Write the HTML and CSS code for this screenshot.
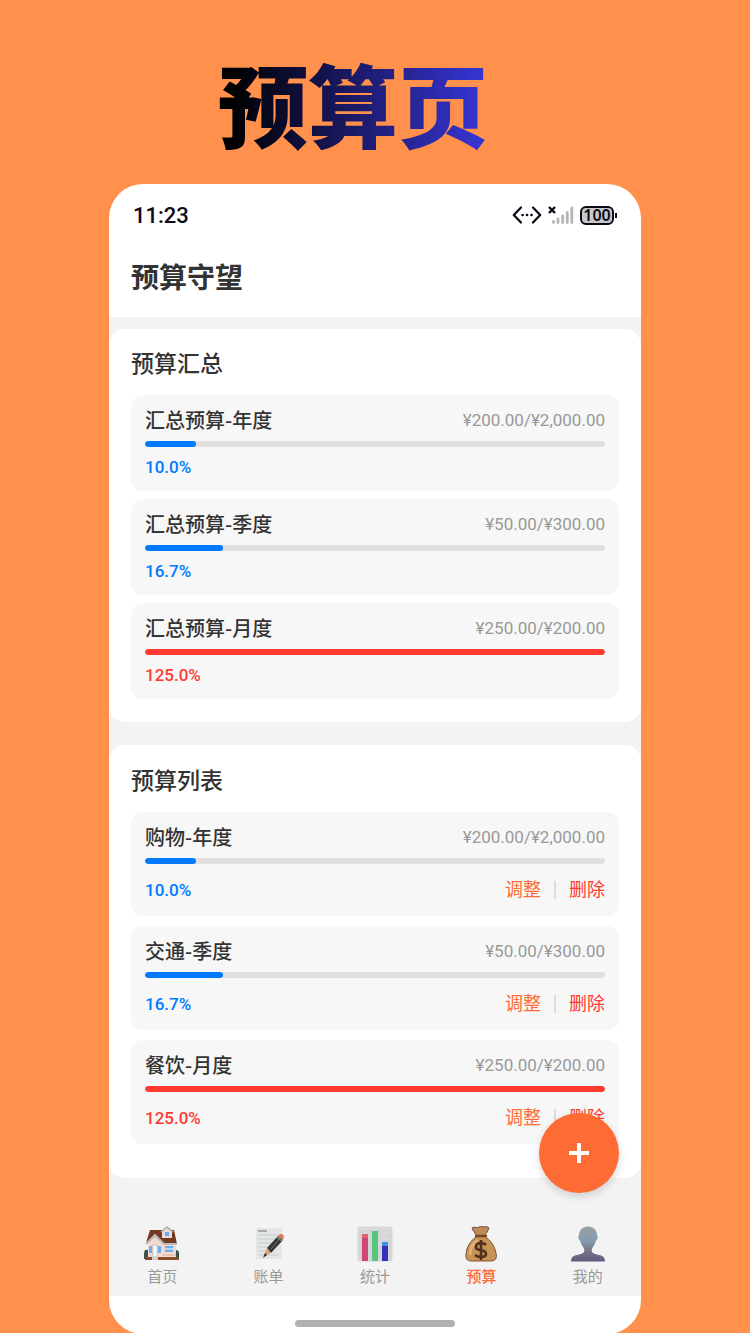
FILE: index.html
```html
<!DOCTYPE html>
<html lang="zh-CN">
<head>
<meta charset="utf-8">
<meta name="viewport" content="width=device-width, initial-scale=1">
<title>预算页</title>
<link rel="stylesheet" href="styles.css">
</head>
<body>
<div class="page">
  <h1 class="poster-title"><span class="poster-text">预算页</span></h1>
  <div class="phone">
    <div class="status-bar">
      <span class="clock">11:23</span>
      <span class="status-icons">
        <svg width="30" height="20" viewBox="0 0 30 20" fill="none" stroke="#0b0b18" stroke-width="2.3" stroke-linecap="round" stroke-linejoin="round" aria-hidden="true"><path d="M9 2.500 1.800 10 9 17.500M21 2.500 28.200 10 21 17.500"/><path d="M10.500 10h.1M15 10h.1M19.500 10h.1" stroke-width="2.600"/></svg>
        <svg width="26" height="20" viewBox="0 0 26 20" fill="none" aria-hidden="true"><path d="M1 2 7 8M7 2 1 8" stroke="#0b0b18" stroke-width="2.400"/><path d="M5.500 16.500v1M10 14v3.500M14.700 11v6.500M19.300 7.500v10M23.800 3v14.500" stroke="#b5b5b9" stroke-width="2.800" stroke-linecap="round"/></svg>
        <span class="battery"><span class="battery-level">100</span></span>
      </span>
    </div>
    <header class="app-header"><h2 class="app-title">预算守望</h2></header>

    <main class="content">
      <section class="card">
        <h3 class="card-title">预算汇总</h3>
        <ul class="items">
          <li class="item">
            <div class="item-head"><span class="item-name">汇总预算-年度</span><span class="amount">¥200.00/¥2,000.00</span></div>
            <div class="track"><div class="fill" style="width:11%"></div></div>
            <div class="item-foot"><span class="percent">10.0%</span></div>
          </li>
          <li class="item">
            <div class="item-head"><span class="item-name">汇总预算-季度</span><span class="amount">¥50.00/¥300.00</span></div>
            <div class="track"><div class="fill" style="width:17%"></div></div>
            <div class="item-foot"><span class="percent">16.7%</span></div>
          </li>
          <li class="item over">
            <div class="item-head"><span class="item-name">汇总预算-月度</span><span class="amount">¥250.00/¥200.00</span></div>
            <div class="track"><div class="fill" style="width:100%"></div></div>
            <div class="item-foot"><span class="percent">125.0%</span></div>
          </li>
        </ul>
      </section>

      <section class="card card-list">
        <h3 class="card-title">预算列表</h3>
        <ul class="items">
          <li class="item">
            <div class="item-head"><span class="item-name">购物-年度</span><span class="amount">¥200.00/¥2,000.00</span></div>
            <div class="track"><div class="fill" style="width:11%"></div></div>
            <div class="item-foot"><span class="percent">10.0%</span><span class="actions"><button class="action" type="button">调整</button><span class="divider"></span><button class="action remove" type="button">删除</button></span></div>
          </li>
          <li class="item">
            <div class="item-head"><span class="item-name">交通-季度</span><span class="amount">¥50.00/¥300.00</span></div>
            <div class="track"><div class="fill" style="width:17%"></div></div>
            <div class="item-foot"><span class="percent">16.7%</span><span class="actions"><button class="action" type="button">调整</button><span class="divider"></span><button class="action remove" type="button">删除</button></span></div>
          </li>
          <li class="item over">
            <div class="item-head"><span class="item-name">餐饮-月度</span><span class="amount">¥250.00/¥200.00</span></div>
            <div class="track"><div class="fill" style="width:100%"></div></div>
            <div class="item-foot"><span class="percent">125.0%</span><span class="actions"><button class="action" type="button">调整</button><span class="divider"></span><button class="action remove" type="button">删除</button></span></div>
          </li>
        </ul>
      </section>
    </main>

    <nav class="tabs">
      <a class="tab" href="#home">
        <svg class="tab-icon" viewBox="0 0 36 36" aria-hidden="true">
          <path d="M0 33v-5q0-5 4-4v9zM31 33v-9q5-1 4 6v3z" fill="#40534a"/>
          <path d="M4 17 11 10l8 7h13v15H4z" fill="#f3d9d0"/>
          <path d="M6 4h24l3 14H19l-8-8-8 8-1-1z" fill="#74391f"/>
          <path d="M18 9v-4l5-4 5 4v7H18z" fill="#e9dcd8"/><path d="m17 6 6-5 6 5" fill="none" stroke="#a9aaa8" stroke-width="1.500"/>
          <path d="M21 6h4v4h-4z" fill="#65adf0"/>
          <path d="m2 18 9-9 9 9h13" fill="none" stroke="#b8bbb8" stroke-width="2"/>
          <path d="M5 20h3v7H5zM14 20h3v7h-3zM21 20h8v6h-8z" fill="#69b1f4"/><path d="M21 23h8" stroke="#fff"/>
          <path d="M9 19h4v12H9z" fill="#fff" stroke="#b4b4b4" stroke-width=".8"/>
          <path d="M19 29h13" stroke="#e4c7ba" stroke-width="2"/><path d="M1 31h33l1 3H1z" fill="#8a4b2d"/><path d="M8 31h6v3H8z" fill="#d3d0cb"/>
        </svg>
        <span>首页</span>
      </a>
      <a class="tab" href="#bills">
        <svg class="tab-icon" viewBox="0 0 36 36" aria-hidden="true">
          <path d="M5 2h26v31H5z" fill="#e4e6e6"/><path d="M7 5h9" stroke="#8e9696" stroke-width="1.500"/>
          <path d="M7 9h21M7 13h19M7 17h16M7 21h13M7 25h9M7 29h21" stroke="#c8cccd"/>
          <path d="m16 22 11-12 5 4-12 13z" fill="#343536"/><path d="m20 23 9-11" stroke="#777"/>
          <path d="m27 10 2-2q2-1 4 2 0 1-1 4z" fill="#e97562"/><path d="m26 11 5 4" stroke="#63a572" stroke-width="1.500"/>
          <path d="m16 22-3 8 7-3z" fill="#dca46d"/><path d="m14 27-2 5 4-3z" fill="#292929"/>
        </svg>
        <span>账单</span>
      </a>
      <a class="tab" href="#stats">
        <svg class="tab-icon" viewBox="0 0 36 36" aria-hidden="true">
          <rect x=".5" y=".5" width="35" height="35" rx="2" fill="#d8d9da"/><path d="M1 5h34M1 10h34M1 15h34M1 20h34M1 25h34M1 30h34M4 1v34M13 1v34M23 1v34M33 1v34" stroke="#cdced0" stroke-width=".7"/>
          <path d="M5 8h6v27H5z" fill="#d34478"/><path d="M5 8h6v4H5z" fill="#e06071"/><path d="M15 5h6v30h-6z" fill="#55c67b"/><path d="M25 16h6v19h-6z" fill="#3431bd"/><path d="M25 16h6v4h-6z" fill="#438ce0"/>
        </svg>
        <span>统计</span>
      </a>
      <a class="tab active" href="#budget" aria-current="page">
        <svg class="tab-icon" viewBox="0 0 36 36" aria-hidden="true">
          <path d="M14 10Q10 5 9 2q3-2 5 0 4-3 7-1 4-1 5 1-1 4-5 8z" fill="#bd8b57" stroke="#78513a"/>
          <path d="M14 10Q4 17 3 28q-1 7 5 7h20q7 0 5-8-2-11-12-17z" fill="#c89356" stroke="#805434"/>
          <path d="M7 29Q7 19 15 14" fill="none" stroke="#e0b17d" stroke-width="3"/><path d="M13 10h10" stroke="#764724" stroke-width="2.400" stroke-linecap="round"/>
          <path d="M23 19q-2-2-5-2-5 0-5 4 0 3 5 3 5 1 5 4 0 3-5 3-4 0-6-2M18 14v20" fill="none" stroke="#53301c" stroke-width="2.600"/>
        </svg>
        <span>预算</span>
      </a>
      <a class="tab" href="#me">
        <svg class="tab-icon" viewBox="0 0 36 36" aria-hidden="true">
          <defs><linearGradient id="person" x1="0" y1="0" x2="0" y2="1"><stop offset="0" stop-color="#9ba0a2"/><stop offset=".4" stop-color="#849caf"/><stop offset=".75" stop-color="#747082"/><stop offset="1" stop-color="#625a82"/></linearGradient></defs>
          <path d="M18 .5c-6 0-9 4-9 9-1 1-1 4 1 5 1 4 3 6 4 8 1 4-1 5-5 6-5 1-8 2-8 7h34c0-5-3-6-8-7-4-1-6-2-5-6 1-2 3-4 4-8 2-1 2-4 1-5 0-5-3-9-9-9z" fill="url(#person)"/>
        </svg>
        <span>我的</span>
      </a>
    </nav>
    <div class="home-area"><span class="home-indicator"></span></div>
    <button class="fab" type="button" aria-label="添加预算">
      <svg width="20" height="20" viewBox="0 0 20 20" aria-hidden="true"><path d="M10 0v20M0 10h20" stroke="#fff" stroke-width="4"/></svg>
    </button>
  </div>
</div>
</body>
</html>
```
FILE: styles.css
```css
* { box-sizing: border-box; }

body {
  margin: 0;
  background: #ff914d;
  color: #333;
  font-family: Roboto, "Noto Sans CJK SC", sans-serif;
}

.page {
  display: flex;
  flex-direction: column;
  min-height: 100vh;
  padding: 0 109px;
}

.poster-title {
  margin: 0;
  padding: 37px 44px 17px 0;
  font-family: "Noto Sans CJK SC", sans-serif;
  font-size: 90px;
  font-weight: 900;
  line-height: 130px;
  text-align: center;
}

.poster-text {
  background: linear-gradient(90deg, #000 5%, #3533cd 95%);
  background-clip: text;
  -webkit-background-clip: text;
  color: transparent;
}

.phone {
  position: relative;
  display: flex;
  flex: 1;
  flex-direction: column;
  overflow: hidden;
  border-radius: 34px;
  background: #fff;
}

.status-bar {
  display: flex;
  align-items: center;
  justify-content: space-between;
  height: 62px;
  padding: 0 24px;
}

.clock {
  color: #0b0b18;
  font-size: 22px;
  font-weight: 500;
}

.status-icons {
  display: flex;
  align-items: center;
  gap: 6px;
}

.battery {
  position: relative;
  display: block;
  width: 34px;
  height: 19px;
  margin-right: 3px;
  border: 2px solid #0b0b18;
  border-radius: 6px;
  background: #c9c9cc;
  color: #0b0b18;
  font-family: "Noto Sans", sans-serif;
  font-size: 16px;
  font-weight: 600;
  line-height: 15px;
  text-align: center;
}

.battery::after {
  content: "";
  position: absolute;
  top: 5px;
  right: -5px;
  width: 2px;
  height: 5px;
  background: #0b0b18;
}

.app-header {
  padding: 13px 22px 18px;
}

.app-title {
  margin: 0;
  font-size: 28px;
  font-weight: 700;
  line-height: 40px;
}

.content {
  display: flex;
  flex-direction: column;
  gap: 23px;
  padding-top: 12px;
  background: #f3f3f3;
}

.card {
  padding: 21px 22px 23px;
  border-radius: 16px;
  background: #fff;
}

.card-list { padding: 22px 22px 34px; }

.card-title {
  margin: 0 0 15px;
  font-size: 23px;
  font-weight: 500;
  line-height: 30px;
}

.items {
  display: flex;
  flex-direction: column;
  gap: 8px;
  margin: 0;
  padding: 0;
  list-style: none;
}

.card-list .items { gap: 10px; }

.item {
  padding: 12px 14px;
  border-radius: 12px;
  background: #f7f7f7;
}

.item-head,
.item-foot {
  display: flex;
  align-items: center;
  justify-content: space-between;
}

.item-name {
  font-family: "Noto Sans CJK SC", sans-serif;
  font-size: 20px;
  font-weight: 500;
  line-height: 26px;
}

.amount {
  color: #999;
  font-size: 17px;
  line-height: 26px;
}

.track {
  height: 6px;
  margin: 8px 0;
  overflow: hidden;
  border-radius: 3px;
  background: #e0e0e0;
}

.fill {
  height: 100%;
  border-radius: 3px;
  background: #007aff;
}

.percent {
  color: #007aff;
  font-size: 17px;
  font-weight: 500;
  line-height: 24px;
}

.over .fill { background: #ff3b30; }
.over .percent { color: #ff3b30; }

.card-list .item { padding-bottom: 8px; }

.card-list .item-foot { height: 36px; }

.actions {
  display: flex;
  align-items: center;
  gap: 13px;
}

.action {
  padding: 0;
  border: 0;
  background: none;
  color: #ff6b35;
  font: inherit;
  font-size: 18px;
  line-height: 24px;
  cursor: pointer;
}

.remove { color: #ff3b30; }

.divider {
  width: 2px;
  height: 18px;
  background: #ddd;
}

.tabs {
  display: grid;
  flex: 1;
  grid-template-columns: repeat(5, 1fr);
  align-items: end;
  padding: 48px 0 8px;
  background: #f3f3f3;
}

.tab {
  display: flex;
  flex-direction: column;
  align-items: center;
  gap: 4px;
  color: #999;
  font-size: 15px;
  line-height: 22px;
  text-decoration: none;
}

.tab-icon {
  width: 36px;
  height: 36px;
}

.active {
  color: #ff6b35;
  font-weight: 500;
}

.home-area {
  display: flex;
  justify-content: center;
  padding: 24px 0 7px;
}

.home-indicator {
  width: 30%;
  height: 7px;
  border-radius: 4px;
  background: #b0b0b0;
}

.fab {
  position: absolute;
  right: 22px;
  bottom: 141px;
  display: grid;
  width: 80px;
  height: 80px;
  padding: 0;
  place-items: center;
  border: 0;
  border-radius: 50%;
  background: #ff6b35;
  box-shadow: 0 3px 8px rgba(0, 0, 0, 0.16);
  cursor: pointer;
}
```
